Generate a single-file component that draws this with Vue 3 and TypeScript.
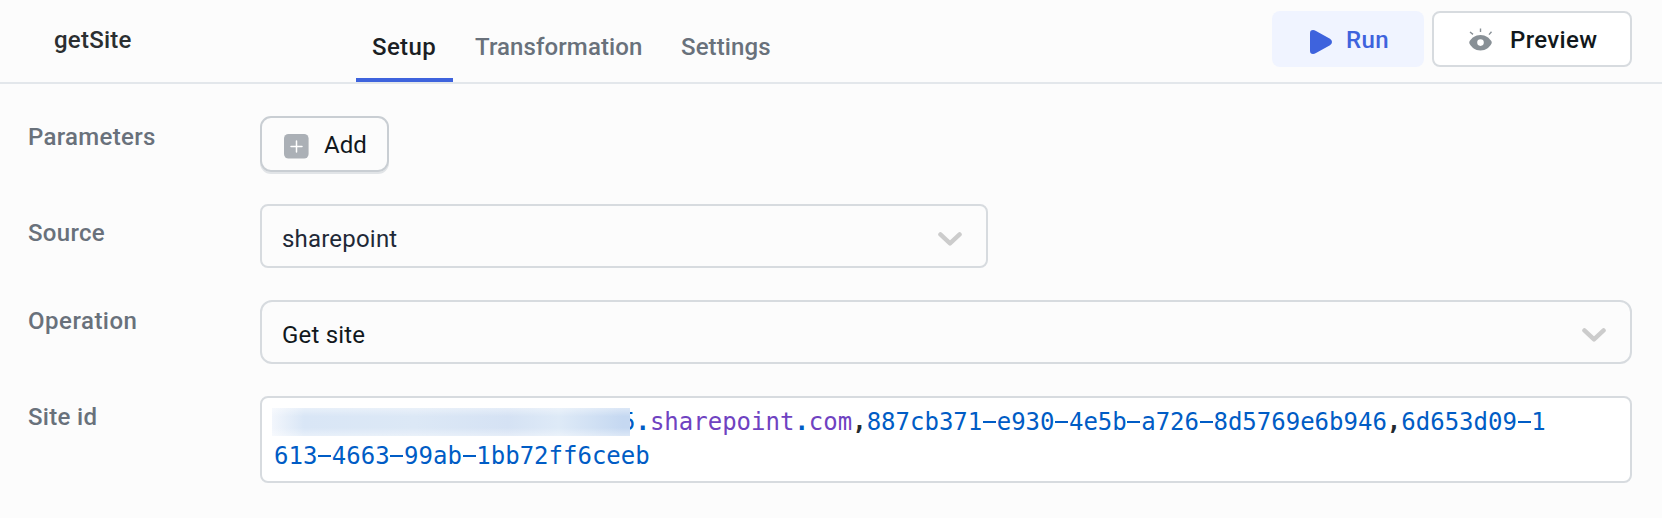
<script setup lang="ts">
import { ref } from 'vue'

type Tab = { label: string; key: string }
type Token = { text: string; kind: 'atom' | 'variable' | 'plain' }

const tabs: Tab[] = [
  { label: 'Setup', key: 'setup' },
  { label: 'Transformation', key: 'transformation' },
  { label: 'Settings', key: 'settings' },
]
const active = ref('setup')

const firstLine: Token[] = [
  { text: '5.', kind: 'atom' },
  { text: 'sharepoint', kind: 'variable' },
  { text: '.', kind: 'atom' },
  { text: 'com', kind: 'variable' },
  { text: ',', kind: 'plain' },
  { text: '887cb371-e930-4e5b-a726-8d5769e6b946', kind: 'atom' },
  { text: ',', kind: 'plain' },
  { text: '6d653d09-1', kind: 'atom' },
]
const secondLine: Token[] = [{ text: '613-4663-99ab-1bb72ff6ceeb', kind: 'atom' }]
const lines = [firstLine, secondLine]

const pieces = (text: string): string[] => text.split(/([-.,])/).filter(Boolean)
</script>

<template>
  <div class="query">
    <header class="header">
      <div class="name">getSite</div>
      <nav class="tabs">
        <button
          v-for="tab in tabs"
          :key="tab.key"
          class="tab"
          :class="[tab.key, { active: active === tab.key }]"
          @click="active = tab.key"
        >{{ tab.label }}</button>
      </nav>
      <div class="actions">
        <button class="run">
          <svg width="22" height="24" viewBox="0 0 22 24">
            <path d="M0 3.2Q0 0 3 0Q4.4 0 6 1L20 8.8Q22 10 22 12Q22 14 20 15.2L6 23Q4.4 24 3 24Q0 24 0 20.8Z" fill="#3e63dd" />
          </svg>
          <span>Run</span>
        </button>
        <button class="preview">
          <svg width="24" height="23" viewBox="0 0 24 23">
            <path d="M1 4L4 6.4M11.5 .5V4M22.5 3.8L20 6.6" fill="none" stroke="#889096" stroke-width="1.4" />
            <path fill-rule="evenodd" d="M11.5 7C17 7 20.4 10.2 22.3 13Q23.2 14.5 22.3 16C20.4 19 17 22.5 11.5 22.5S2.6 19 .7 16Q-.2 14.5 .7 13C2.6 10.2 6 7 11.5 7ZM11.5 11.3A3.3 3.3 0 1 0 11.5 17.9A3.3 3.3 0 1 0 11.5 11.3Z" fill="#889096" />
          </svg>
          <span>Preview</span>
        </button>
      </div>
    </header>

    <main class="form">
      <div class="row parameters">
        <label>Parameters</label>
        <button class="add">
          <svg width="25" height="25" viewBox="0 0 25 25">
            <rect width="24.6" height="24.6" rx="4.5" fill="#abb0b6" />
            <path d="M7 12.5H18M12.5 7V18" stroke="#fff" stroke-width="1.5" stroke-linecap="round" />
          </svg>
          <span>Add</span>
        </button>
      </div>
      <div class="row source">
        <label>Source</label>
        <div class="select">
          <span>sharepoint</span>
          <svg width="24" height="15" viewBox="0 0 24 15">
            <path d="M2.4 2.4L12 11.4L21.6 2.4" fill="none" stroke="#ccc" stroke-width="4.4" stroke-linecap="round" stroke-linejoin="round" />
          </svg>
        </div>
      </div>
      <div class="row operation">
        <label>Operation</label>
        <div class="select">
          <span>Get site</span>
          <svg width="24" height="15" viewBox="0 0 24 15">
            <path d="M2.4 2.4L12 11.4L21.6 2.4" fill="none" stroke="#ccc" stroke-width="4.4" stroke-linecap="round" stroke-linejoin="round" />
          </svg>
        </div>
      </div>
      <div class="row site">
        <label>Site id</label>
        <div class="editor">
          <div v-for="(line, i) in lines" :key="i" class="line" :class="{ masked: i === 0 }">
            <span v-for="(token, j) in line" :key="j" :class="token.kind"><span
              v-for="(piece, k) in pieces(token.text)"
              :key="k"
              :class="{ dash: piece === '-', point: piece === '.' || piece === ',' }"
            >{{ piece }}</span></span>
          </div>
          <div class="mask"></div>
        </div>
      </div>
    </main>
  </div>
</template>

<style>
body {
  margin: 0;
  background: #fcfcfc;
}
</style>

<style scoped>
.query {
  height: 518px;
  overflow: hidden;
  background: #fcfcfc;
  font: 24px/32px Roboto, "Liberation Sans", sans-serif;
  color: #11181c;
}
* {
  box-sizing: border-box;
}
button {
  margin: 0;
  padding: 0;
  border: 0;
  background: none;
  font: inherit;
  color: inherit;
}
svg {
  display: block;
  flex: none;
}
.header {
  display: flex;
  height: 84px;
  border-bottom: 2px solid #e3e7eb;
  padding-right: 30px;
  font-weight: 500;
}
.name {
  width: 356px;
  padding: 24px 0 0 54px;
  color: #2b2f31;
  letter-spacing: 0.25px;
}
.tabs {
  display: flex;
}
.tab {
  height: 82px;
  padding-top: 12px;
  color: #69717b;
  text-align: left;
  white-space: nowrap;
  letter-spacing: 0.1px;
}
.tab.active {
  color: #1b1f24;
  border-bottom: 4px solid #3e63dd;
  padding-top: 16px;
  letter-spacing: 0.35px;
}
.setup {
  width: 97px;
  padding-left: 16px;
}
.transformation {
  width: 206px;
  padding-left: 22px;
}
.settings {
  width: 130px;
  padding-left: 22px;
}
.actions {
  display: flex;
  gap: 8px;
  margin-left: auto;
  padding-top: 11px;
}
.run,
.preview {
  display: flex;
  height: 56px;
  border-radius: 8px;
  letter-spacing: 0.35px;
}
.run {
  width: 152px;
  padding: 13px 0 0 38px;
  gap: 14px;
  background: #f0f4ff;
  color: #3e63dd;
}
.run svg {
  margin-top: 6px;
}
.preview {
  width: 200px;
  padding: 11px 0 0 35px;
  gap: 17px;
  border: 2px solid #d7dbdf;
  background: #fff;
}
.preview svg {
  margin-top: 4px;
}
.form {
  padding: 32px 30px 0 28px;
}
.row {
  display: flex;
}
.row label {
  width: 232px;
  flex: none;
  padding-top: 5px;
  font-weight: 500;
  color: #69717b;
  letter-spacing: 0.3px;
}
.parameters {
  height: 88px;
}
.source {
  height: 96px;
}
.source label {
  padding-top: 13px;
}
.operation {
  height: 96px;
}
.operation label {
  letter-spacing: 0.5px;
}
.add {
  display: flex;
  width: 129px;
  height: 56px;
  padding: 11px 0 0 22px;
  gap: 15px;
  border: 2px solid #c9ced3;
  border-radius: 11px;
  box-shadow: 0 2px 0 #e1e4e7;
}
.add svg {
  margin-top: 5px;
}
.select {
  display: flex;
  justify-content: space-between;
  width: 728px;
  height: 64px;
  padding: 17px 24px 0 20px;
  border: 2px solid #d7dbdf;
  border-radius: 8px;
  color: #1f2937;
  letter-spacing: 0.2px;
}
.select svg {
  margin-top: 9px;
}
.operation .select {
  width: 1372px;
  border-radius: 12px;
  color: #11181c;
}
.editor {
  position: relative;
  width: 1372px;
  height: 87px;
  padding: 7px 0 0 12px;
  border: 2px solid #d7dbdf;
  border-radius: 8px;
  background: #fff;
  font: 24px/34px "DejaVu Sans Mono", "Liberation Mono", monospace;
}
.line {
  height: 34px;
  white-space: nowrap;
}
.masked {
  padding-left: 347px;
}
.atom {
  color: #005cc5;
}
.variable {
  color: #6f42c1;
}
.plain {
  color: #24292e;
}
/* hyphens are painted as a wide bar across the character cell */
.dash {
  display: inline-block;
  height: 34px;
  vertical-align: top;
  -webkit-text-fill-color: transparent;
  background: linear-gradient(#005cc5, #005cc5) center / 13px 2px no-repeat;
}
.point {
  font-weight: 700;
}
.mask {
  position: absolute;
  left: 10px;
  top: 10px;
  width: 358px;
  height: 28px;
  background:
    linear-gradient(180deg, rgba(255, 255, 255, 0.4), transparent 30%, transparent 70%, rgba(255, 255, 255, 0.4)),
    linear-gradient(90deg, #f2f6fc, #d9e6f6 9%, #dce8f6 40%, #d5e2f4 66%, #deeaf7 80%, #c5d8f1 98%);
}
</style>
